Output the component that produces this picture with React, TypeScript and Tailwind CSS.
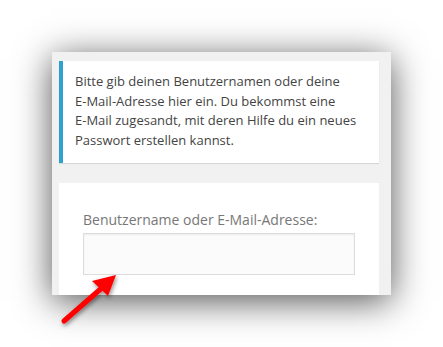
export default function App() {
  return (
    <div className="relative w-[443px] h-[347px] bg-white overflow-hidden font-['Open_Sans',sans-serif]">
      <div className="ml-[52px] mt-[52px] w-[339px] h-[243px] bg-[#f1f1f1] pl-[7px] pt-[9px] overflow-hidden shadow-[0_6px_34px_rgba(0,0,0,0.68)]">
        {/* notice */}
        <div className="w-[320px] h-[102px] bg-white border-l-4 border-[#2ea2cc] pl-3 pt-[11px] shadow-[0_1px_1px_rgba(0,0,0,0.1)]">
          <p className="text-[13px] leading-[19.5px] text-[#444]">
            Bitte gib deinen Benutzernamen oder deine
            <br />
            E-Mail-Adresse hier ein. Du bekommst eine
            <br />
            E-Mail zugesandt, mit deren Hilfe du ein neues
            <br />
            Passwort erstellen kannst.
          </p>
        </div>

        {/* form */}
        <div className="mt-5 w-[320px] h-[200px] bg-white pl-6 pt-[27px]">
          <label className="block text-[14px] leading-5 text-[#777]">
            Benutzername oder E-Mail-Adresse:
          </label>
          <div className="mt-[3px] w-[272px] h-[42px] bg-[#fbfbfb] border border-[#ddd] shadow-[inset_0_1px_2px_rgba(0,0,0,0.07)]" />
        </div>
      </div>

      {/* red arrow */}
      <svg
        className="absolute left-0 top-0"
        width="443"
        height="347"
        viewBox="0 0 443 347"
      >
        <defs>
          <filter id="sh" x="-50%" y="-50%" width="200%" height="200%">
            <feDropShadow dx="1" dy="2" stdDeviation="2" floodColor="#000" floodOpacity="0.45" />
          </filter>
        </defs>
        <g filter="url(#sh)">
          <line x1="64" y1="321" x2="104" y2="286" stroke="#f00" strokeWidth="5" strokeLinecap="round" />
          <polygon points="116,275 92,281 108,296" fill="#f00" />
        </g>
      </svg>
    </div>
  );
}
